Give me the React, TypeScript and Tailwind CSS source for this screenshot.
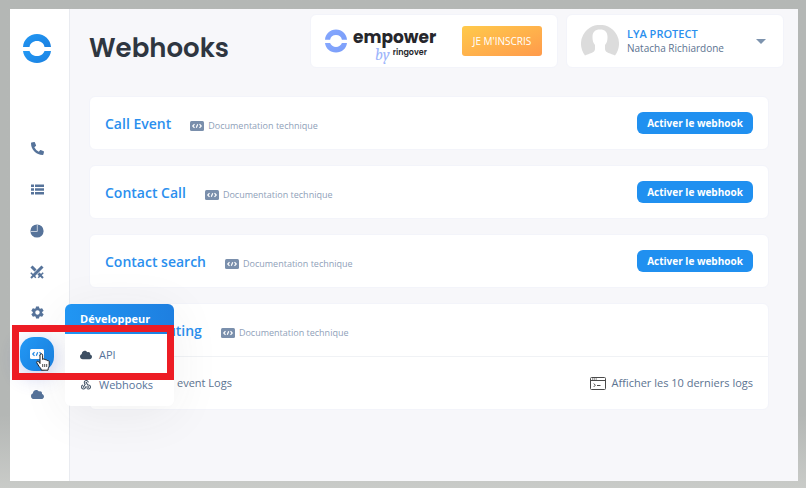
import { FaCloud, FaPhoneAlt } from "react-icons/fa";
import { IoMdSettings } from "react-icons/io";
import { MdWebhook } from "react-icons/md";

const webhooks = [
  { id: "call-event", title: "Call Event", active: false },
  { id: "contact-call", title: "Contact Call", active: false },
  { id: "contact-search", title: "Contact search", active: false },
  { id: "smart-routing", title: "Smart Routing", active: true },
];

function RingLogo({ className, from, to }: { className?: string; from: string; to: string }) {
  const id = `ring-${from.slice(1)}`;
  return (
    <svg viewBox="0 0 28 29" className={className} aria-hidden="true">
      <defs>
        <linearGradient id={id} x1="0" y1="0" x2="1" y2="1">
          <stop offset="0" stopColor={from} />
          <stop offset="1" stopColor={to} />
        </linearGradient>
      </defs>
      <g fill={`url(#${id})`}>
        <path d="M0 13C.5 5.600 6.300 0 14 0s13.500 5.600 14 13h-6.500C21 9.500 18 7 14 7s-7 2.500-7.500 6z" />
        <path d="M0 17c.8 7 6.500 12 14 12s13.200-5 14-12h-6.500c-1 3-4 5-7.500 5s-6.500-2-7.500-5z" />
      </g>
    </svg>
  );
}

function CodeIcon({ className, stroke }: { className?: string; stroke: string }) {
  return (
    <svg viewBox="0 0 14 10" className={className} aria-hidden="true">
      <rect width="14" height="10" rx="1.500" fill="currentColor" />
      <path d="M4.500 3.200 2.800 5l1.700 1.800M9.500 3.200 11.200 5 9.500 6.800M7.700 3.200 6.300 6.800" fill="none" stroke={stroke} strokeWidth="1.200" />
    </svg>
  );
}

function ListIcon({ className }: { className?: string }) {
  return (
    <svg viewBox="0 0 13 11" className={className} fill="currentColor" aria-hidden="true">
      <path d="M0 .5h3v2.500H0zM0 4.300h3v2.500H0zM0 8.100h3v2.500H0zM4 .5h9v2.500H4zM4 4.300h9v2.500H4zM4 8.100h9v2.500H4z" />
    </svg>
  );
}

function PieIcon({ className }: { className?: string }) {
  return (
    <svg viewBox="0 0 14 14" className={className} aria-hidden="true">
      <circle cx="7" cy="7" r="6.600" fill="currentColor" />
      <path d="M7.300.5v7H.5" fill="none" stroke="#c3cddb" strokeWidth="1" />
    </svg>
  );
}

function SwordsIcon({ className }: { className?: string }) {
  return (
    <svg viewBox="0 0 14 14" className={className} fill="none" stroke="currentColor" aria-hidden="true">
      <path d="M1.500 1.500 10.500 10.500" strokeWidth="3" />
      <path d="M12.500 1.500 3.500 10.500" stroke="#fff" strokeWidth="4" />
      <path d="M12.500 1.500 3.500 10.500" strokeWidth="3" />
      <path d="M.8 7.800 5.800 12.800M13.200 7.800 8.200 12.800" strokeWidth="1.500" />
      <path d="M3.500 10.500 1 13M10.500 10.500 13 13" strokeWidth="2" />
    </svg>
  );
}

function TerminalIcon({ className }: { className?: string }) {
  return (
    <svg viewBox="0 0 16 13" className={className} fill="none" stroke="#4a4a4a" aria-hidden="true">
      <rect x=".5" y=".5" width="15" height="12" rx="1" />
      <path d="M.5 3.500h15" />
      <path d="M2 2h5" strokeDasharray="1.200 .6" />
      <path d="M3.800 6.500 5.300 8.200 3.800 9.900M7 8.500h3.500" />
    </svg>
  );
}

function AvatarIcon({ className }: { className?: string }) {
  return (
    <svg viewBox="0 0 38 32" className={className} aria-hidden="true">
      <path d="M4 30.500A19 19 0 1 1 34 30.500C30 28.500 24 28 24 24v-4c2-2 2.500-5 2.500-8 0-5-2.500-7.500-7.500-7.500s-7.500 2.500-7.500 7.500c0 3 .5 6 2.500 8v4c0 4-6 4.500-10 6.500z" fill="#dcdcdc" />
    </svg>
  );
}

function HandCursor({ className }: { className?: string }) {
  return (
    <svg viewBox="0 0 14 18" className={className} aria-hidden="true">
      <path
        d="M4 10.500V2.200C4 .3 6.600.3 6.600 2.200v4.300c.6-.9 2.300-.6 2.400.5.700-.7 2-.3 2.200.7.900-.5 2 0 2 1.200v3.600c0 1.500-1.200 2.500-1.200 4.700H5.300c0-2-2-3-3.100-5.200L.8 9.800C.2 8.500 1.700 7.600 2.600 8.600z"
        fill="#fff"
        stroke="#222"
        strokeWidth="1"
      />
      <path d="M6.700 11v3M8.700 11v3M10.700 11v3" stroke="#222" strokeWidth=".8" />
    </svg>
  );
}

function DeveloperMenu() {
  return (
    <div className="absolute top-[-29px] left-[55px] z-10 w-[109px] overflow-hidden rounded-md bg-white shadow-[0_8px_50px_rgba(60,60,60,0.07)]">
      <div className="flex h-[30px] items-center bg-linear-to-r from-[#2196f3] to-[#1e7fe0] pl-[15px] text-[11px] font-bold text-white">
        Développeur
      </div>
      <a href="#api" className="flex h-[42px] items-center gap-[7px] pl-[15px] text-[11px]">
        <FaCloud className="h-3 w-3 text-[#3d4f63]" />
        API
      </a>
      <a href="#webhooks" className="flex h-[30px] items-start gap-[7px] pl-[15px] text-[11px] leading-[18px]">
        <MdWebhook className="mt-[3px] h-3 w-3 text-[#3d4f63]" />
        Webhooks
      </a>
    </div>
  );
}

function Sidebar() {
  const item = "flex h-[41px] w-full items-center justify-center";
  return (
    <aside className="w-[60px] shrink-0 border-r border-[#e9ebf0] bg-white pt-[25px] pr-[5px] text-[#56739a]">
      <a href="#home" aria-label="Ringover" className="flex justify-center">
        <RingLogo className="h-[29px] w-7" from="#2299f5" to="#1b80e0" />
      </a>
      <nav className="mt-[65px]">
        <button type="button" aria-label="Appels" className={item}>
          <FaPhoneAlt className="h-[13px] w-[13px]" />
        </button>
        <button type="button" aria-label="Listes" className={item}>
          <ListIcon className="h-[11px] w-[13px]" />
        </button>
        <button type="button" aria-label="Statistiques" className={item}>
          <PieIcon className="h-[14px] w-[14px]" />
        </button>
        <button type="button" aria-label="Intégrations" className={item}>
          <SwordsIcon className="h-[14px] w-[14px]" />
        </button>
        <button type="button" aria-label="Réglages" className={item}>
          <IoMdSettings className="h-[15px] w-[15px]" />
        </button>
        <div className="relative">
          <button type="button" aria-label="Développeur" className={item}>
            <span className="flex h-[34px] w-[34px] items-center justify-center rounded-[14px] bg-linear-to-br from-[#2299f5] to-[#1b80e0] text-white shadow-[0_5px_20px_rgba(60,80,200,0.3)]">
              <CodeIcon className="h-[10px] w-[14px]" stroke="#1e88e5" />
            </span>
          </button>
          <DeveloperMenu />
          <div className="absolute top-[-8px] left-[2px] z-20 h-[55px] w-[162px] border-[7px] border-[#ed1c24]" />
          <HandCursor className="absolute top-5 left-[26px] z-30 h-[18px] w-[14px]" />
        </div>
        <button type="button" aria-label="Cloud" className={item}>
          <FaCloud className="h-[13px] w-[13px]" />
        </button>
      </nav>
    </aside>
  );
}

function Header() {
  return (
    <header className="flex h-[54px] pr-[14px]">
      <h1 className="flex-1 pt-[14px] font-[Poppins,Inter,sans-serif] text-[26px] leading-10 font-semibold text-[#2f3640]">Webhooks</h1>
      <div className="flex w-[248px] items-center rounded-md border border-[#f3f4fa] bg-white pr-[15px] pl-[14px]">
        <RingLogo className="h-6 w-[22px]" from="#86a8ff" to="#7a9df8" />
        <div className="ml-[6px] flex-1 pt-3 font-[Poppins,Inter,sans-serif] font-bold text-[#26262b]">
          <div className="text-[17px] leading-5">empower</div>
          <div className="flex h-5 gap-[3px] pl-[22px]">
            <span className="font-serif text-[16px] leading-4 font-normal text-[#9db5fb] italic">by</span>
            <span className="text-[8px] leading-3 font-semibold">ringover</span>
          </div>
        </div>
        <button type="button" className="h-[30px] w-20 rounded-[3px] bg-linear-to-br from-[#ffca4b] to-[#ff9a4b] text-[10px] text-white">
          JE M'INSCRIS
        </button>
      </div>
      <button type="button" className="ml-2 flex w-[218px] items-center rounded-md border border-[#f3f4fa] bg-white pr-[17px] pl-[14px] text-left">
        <AvatarIcon className="h-8 w-[38px]" />
        <span className="ml-2 flex-1 text-[11px] leading-[15px]">
          <span className="block font-semibold text-[#2b8fee]">LYA PROTECT</span>
          <span className="block text-[10px]">Natacha Richiardone</span>
        </span>
        <svg viewBox="0 0 10 5" className="h-[5px] w-[10px]" aria-hidden="true">
          <path d="M0 0h10L5 5z" fill="#7d93ae" />
        </svg>
      </button>
    </header>
  );
}

export default function App() {
  return (
    <div className="min-h-screen bg-linear-to-b from-[#b4b7b5] from-85% to-[#c9cbc8] pt-[9px] pr-2 pb-[7px] pl-[10px] font-['Open_Sans',sans-serif] text-[#5c7391]">
      <div className="flex min-h-[calc(100vh-16px)] bg-[#f7f7fa]">
        <Sidebar />
        <main className="min-w-0 flex-1 pt-[5px] pb-10 pl-[19px]">
          <Header />
          <div className="mt-7 mr-[29px] flex flex-col gap-[15px]">
            {webhooks.map((hook) => (
              <section key={hook.id} className="rounded-md border border-[#f3f4fa] bg-white">
                <div className="flex h-[52px] items-center px-[15px]">
                  <h2 className="text-[14px] font-semibold text-[#2b8fee]">{hook.title}</h2>
                  <a href={`#doc-${hook.id}`} className="ml-[19px] flex flex-1 items-center gap-1 pt-[5px] text-[9px] text-[#8fa1b9]">
                    <CodeIcon className="h-[10px] w-[14px] text-[#7a8fac]" stroke="#fff" />
                    Documentation technique
                  </a>
                  {!hook.active && (
                    <button type="button" className="h-[22px] w-[116px] rounded-md bg-[#2090f0] text-[10px] font-bold text-white">
                      Activer le webhook
                    </button>
                  )}
                </div>
                {hook.active && (
                  <div className="flex h-[53px] items-center justify-between border-t border-[#f0f2f5] px-[15px] text-[11px]">
                    <span className="pl-[72px]">event Logs</span>
                    <button type="button" className="flex items-center gap-[6px]">
                      <TerminalIcon className="h-[13px] w-4" />
                      Afficher les 10 derniers logs
                    </button>
                  </div>
                )}
              </section>
            ))}
          </div>
        </main>
      </div>
    </div>
  );
}
